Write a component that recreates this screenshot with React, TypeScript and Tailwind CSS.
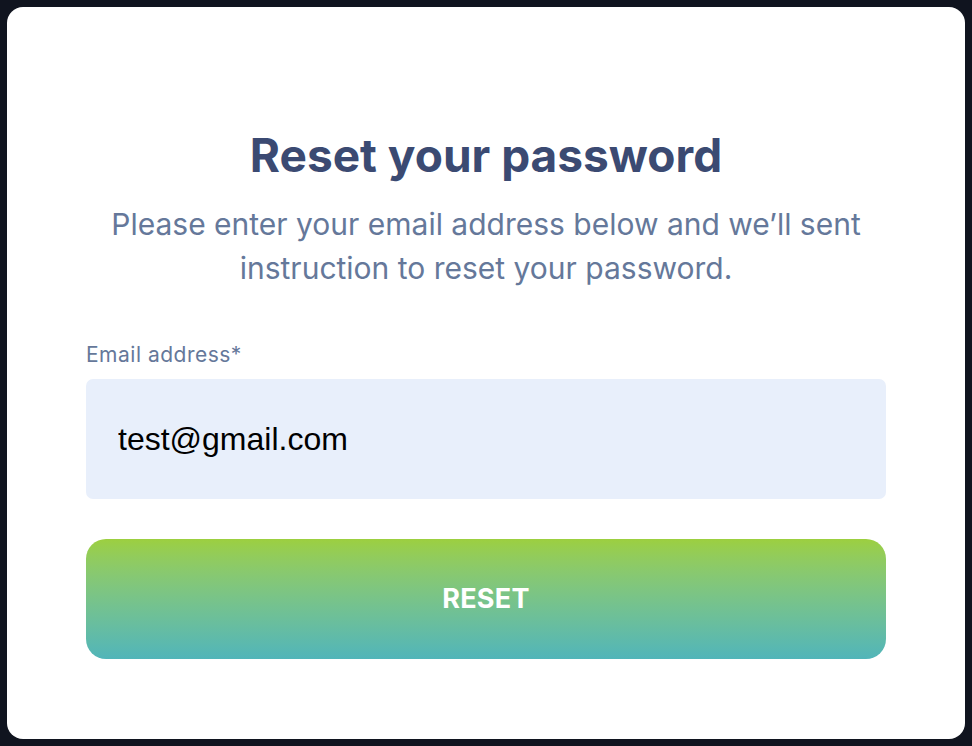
export default function App() {
  return (
    <div className="flex h-[746px] w-[972px] bg-[#10141f] p-[7px] font-['Inter',sans-serif]">
      <div className="flex flex-1 flex-col items-center rounded-[16px] bg-white px-[79px] pt-[120px]">
        <h1 className="text-[46px] font-bold leading-[56px] text-[#3b4a72]">
          Reset your password
        </h1>
        <p className="mt-[19px] text-center text-[30px] leading-[44px] text-[#65789a]">
          Please enter your email address below and we’ll sent
          <br />
          instruction to reset your password.
        </p>
        <form className="mt-[51px] flex w-full flex-col" onSubmit={(e) => e.preventDefault()}>
          <label className="text-[21px] leading-[28px] tracking-[0.5px] text-[#65789a]">Email address*</label>
          <input
            defaultValue="test@gmail.com"
            className="mt-[10px] h-[120px] w-full rounded-[7px] bg-[#e8effb] px-[32px] font-['Liberation_Sans',sans-serif] text-[32px] text-black outline-none"
          />
          <button
            type="submit"
            className="mt-[40px] h-[120px] w-full rounded-[20px] bg-gradient-to-b from-[#9ccf3f] to-[#51b5b9] text-[27px] font-bold tracking-[0.3px] text-white"
          >
            RESET
          </button>
        </form>
      </div>
    </div>
  );
}
